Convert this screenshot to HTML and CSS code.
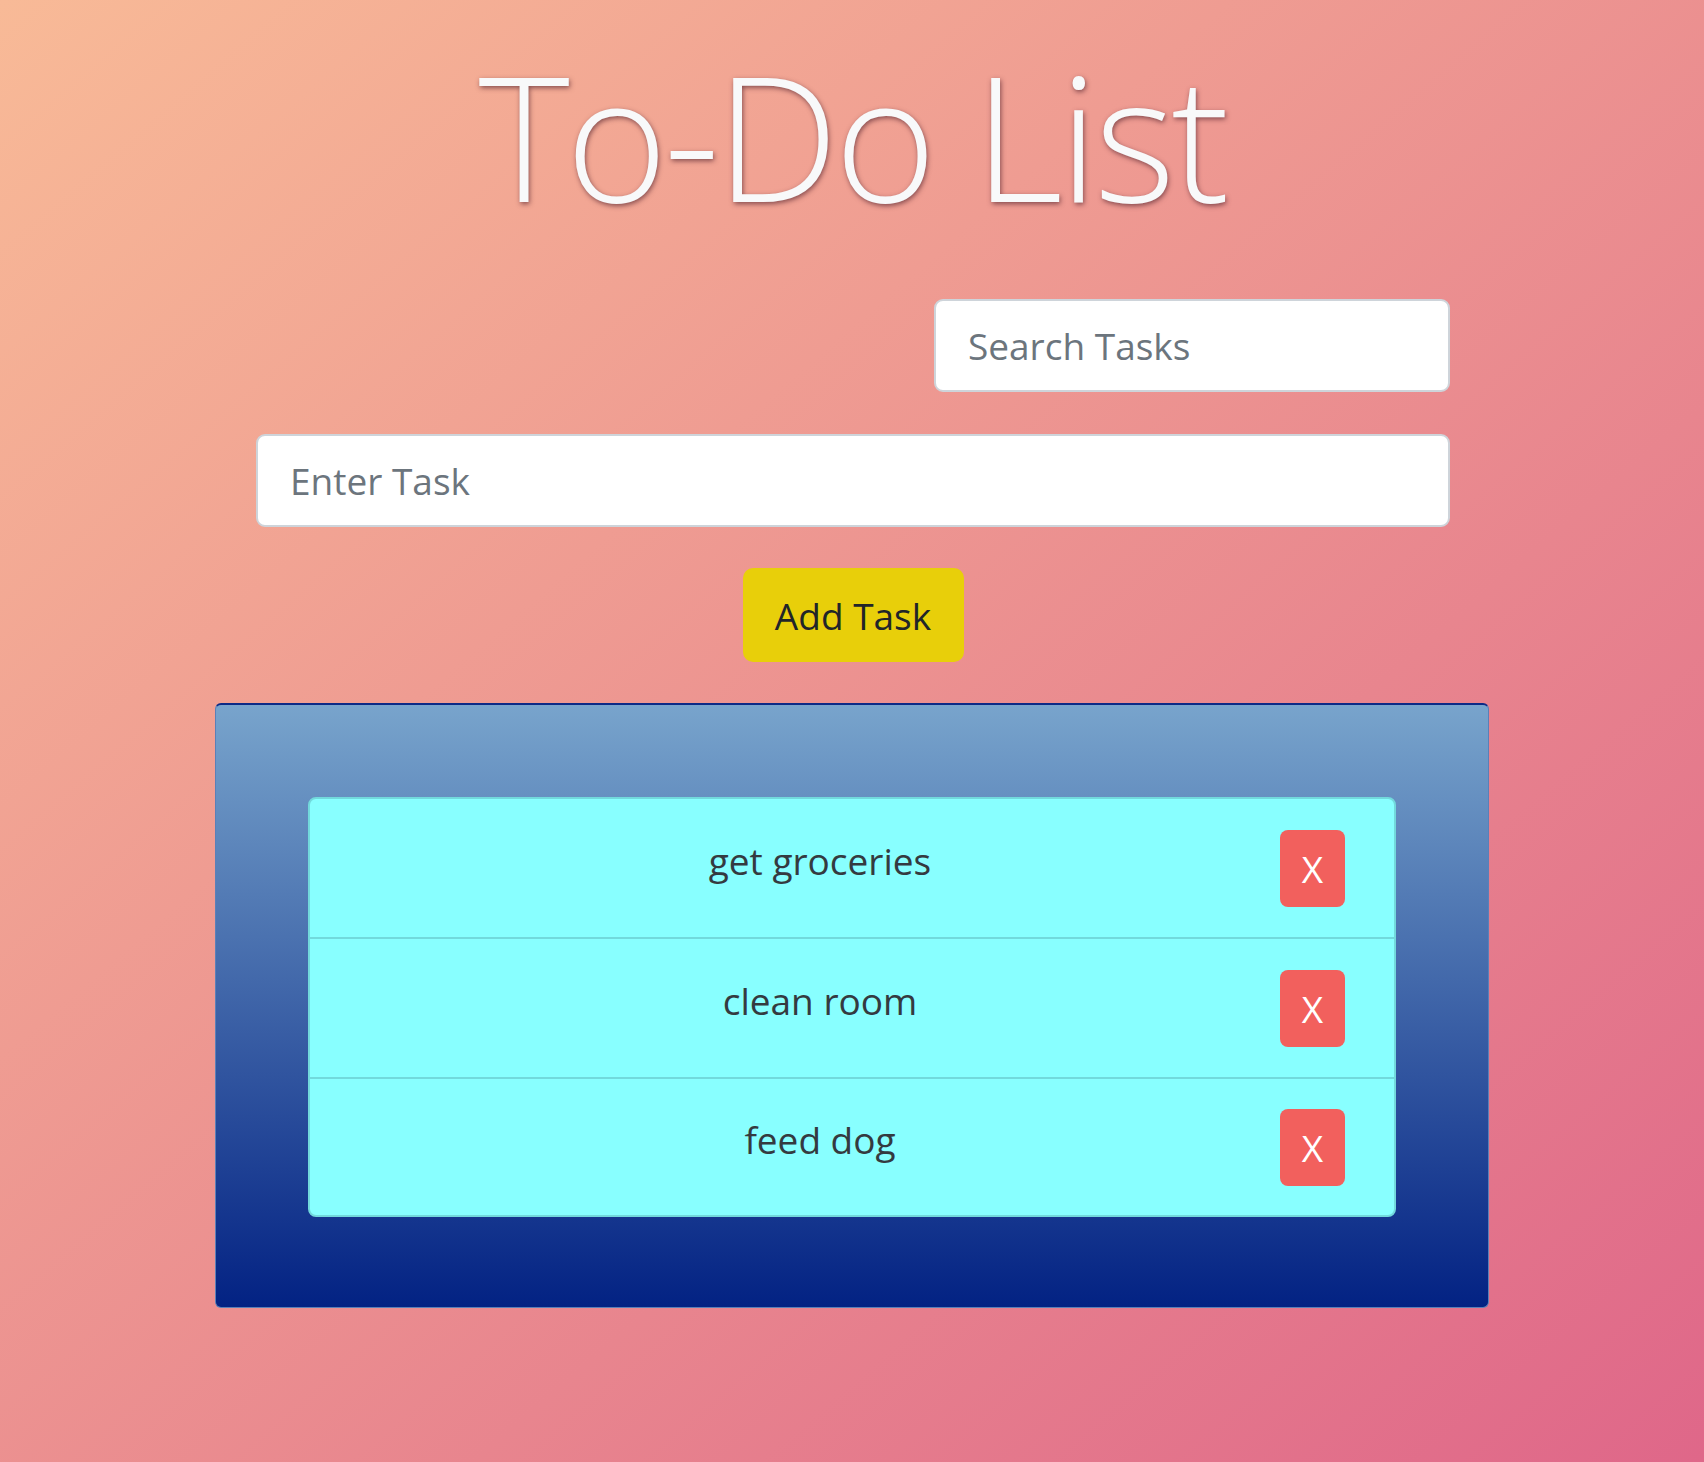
FILE: index.html
```html
<!DOCTYPE html>
<html lang="en">
<head>
<meta charset="utf-8">
<title>To-Do List</title>
<link rel="stylesheet" href="styles.css">
</head>
<body>
<main class="page">
  <h1 class="title">To-Do List</h1>
  <form class="task-form">
    <div class="search-row">
      <input class="field field-search" type="text" placeholder="Search Tasks">
    </div>
    <input class="field field-task" type="text" placeholder="Enter Task">
    <div class="button-row">
      <button class="add-btn" type="button">Add Task</button>
    </div>
  </form>
  <section class="panel">
    <ul class="task-list">
      <li class="task"><span class="task-text">get groceries</span><button class="del-btn" type="button">X</button></li>
      <li class="task"><span class="task-text">clean room</span><button class="del-btn" type="button">X</button></li>
      <li class="task"><span class="task-text">feed dog</span><button class="del-btn" type="button">X</button></li>
    </ul>
  </section>
</main>
</body>
</html>
```

FILE: styles.css
```css
* { box-sizing: border-box; }

html, body {
  margin: 0;
  padding: 0;
}

body {
  min-height: 1462px;
  background: linear-gradient(to bottom right, #f8ba97, #df6789);
  font-family: "Open Sans", "Noto Sans", sans-serif;
  color: #212529;
}

.page {
  width: 1274px;
  margin: 0 auto;
  display: flex;
  flex-direction: column;
}

.title {
  margin: 0;
  padding-top: 24px;
  font-weight: 300;
  font-size: 174px;
  line-height: 222px;
  text-align: center;
  color: #f8f9fa;
  letter-spacing: -4px;
  text-shadow: 1px 2px 5px rgba(90, 40, 50, 0.7);
}

.task-form {
  margin: 53px 39px 0 41px;
  display: flex;
  flex-direction: column;
}

.search-row {
  display: flex;
  justify-content: flex-end;
}

.field {
  height: 93px;
  padding: 0 32px;
  font-family: "Open Sans", "Noto Sans", sans-serif;
  font-size: 37px;
  color: #495057;
  background: #fff;
  border: 2px solid #ced4da;
  border-radius: 9px;
  outline: none;
}

.field::placeholder {
  color: #6c757d;
}

.field-search {
  width: 516px;
}

.field-task {
  width: 100%;
  margin-top: 42px;
  height: 93px;
}

.button-row {
  display: flex;
  justify-content: center;
  margin-top: 41px;
}

.add-btn {
  width: 221px;
  height: 94px;
  font-family: "Open Sans", "Noto Sans", sans-serif;
  font-size: 37px;
  color: #212529;
  background: #e8cf0a;
  border: none;
  border-radius: 10px;
  padding: 0;
}

.panel {
  margin-top: 41px;
  height: 605px;
  padding: 92px 92px;
  background: linear-gradient(to bottom, #78a4cc, #032283);
  border: 1px solid #5a80b8;
  border-top: 2px solid #0c2a86;
  border-radius: 6px;
}

.task-list {
  list-style: none;
  margin: 0;
  padding: 0;
  background: #88ffff;
  border: 2px solid #72d9dc;
  border-radius: 8px;
}

.task {
  height: 140px;
  display: flex;
  align-items: center;
  padding: 0 49px 0 50px;
  border-top: 2px solid #72d9dc;
}

.task:first-child {
  border-top: none;
  height: 138px;
}

.task:last-child {
  height: 138px;
}

.task-text {
  flex: 1;
  text-align: center;
  font-size: 37px;
  line-height: 55px;
  color: #343a40;
  margin-bottom: 16px;
}

.del-btn {
  width: 65px;
  height: 77px;
  padding: 0;
  border: none;
  border-radius: 8px;
  background: #f2605d;
  color: #fff;
  font-family: "Open Sans", "Noto Sans", sans-serif;
  font-size: 37px;
}
```
